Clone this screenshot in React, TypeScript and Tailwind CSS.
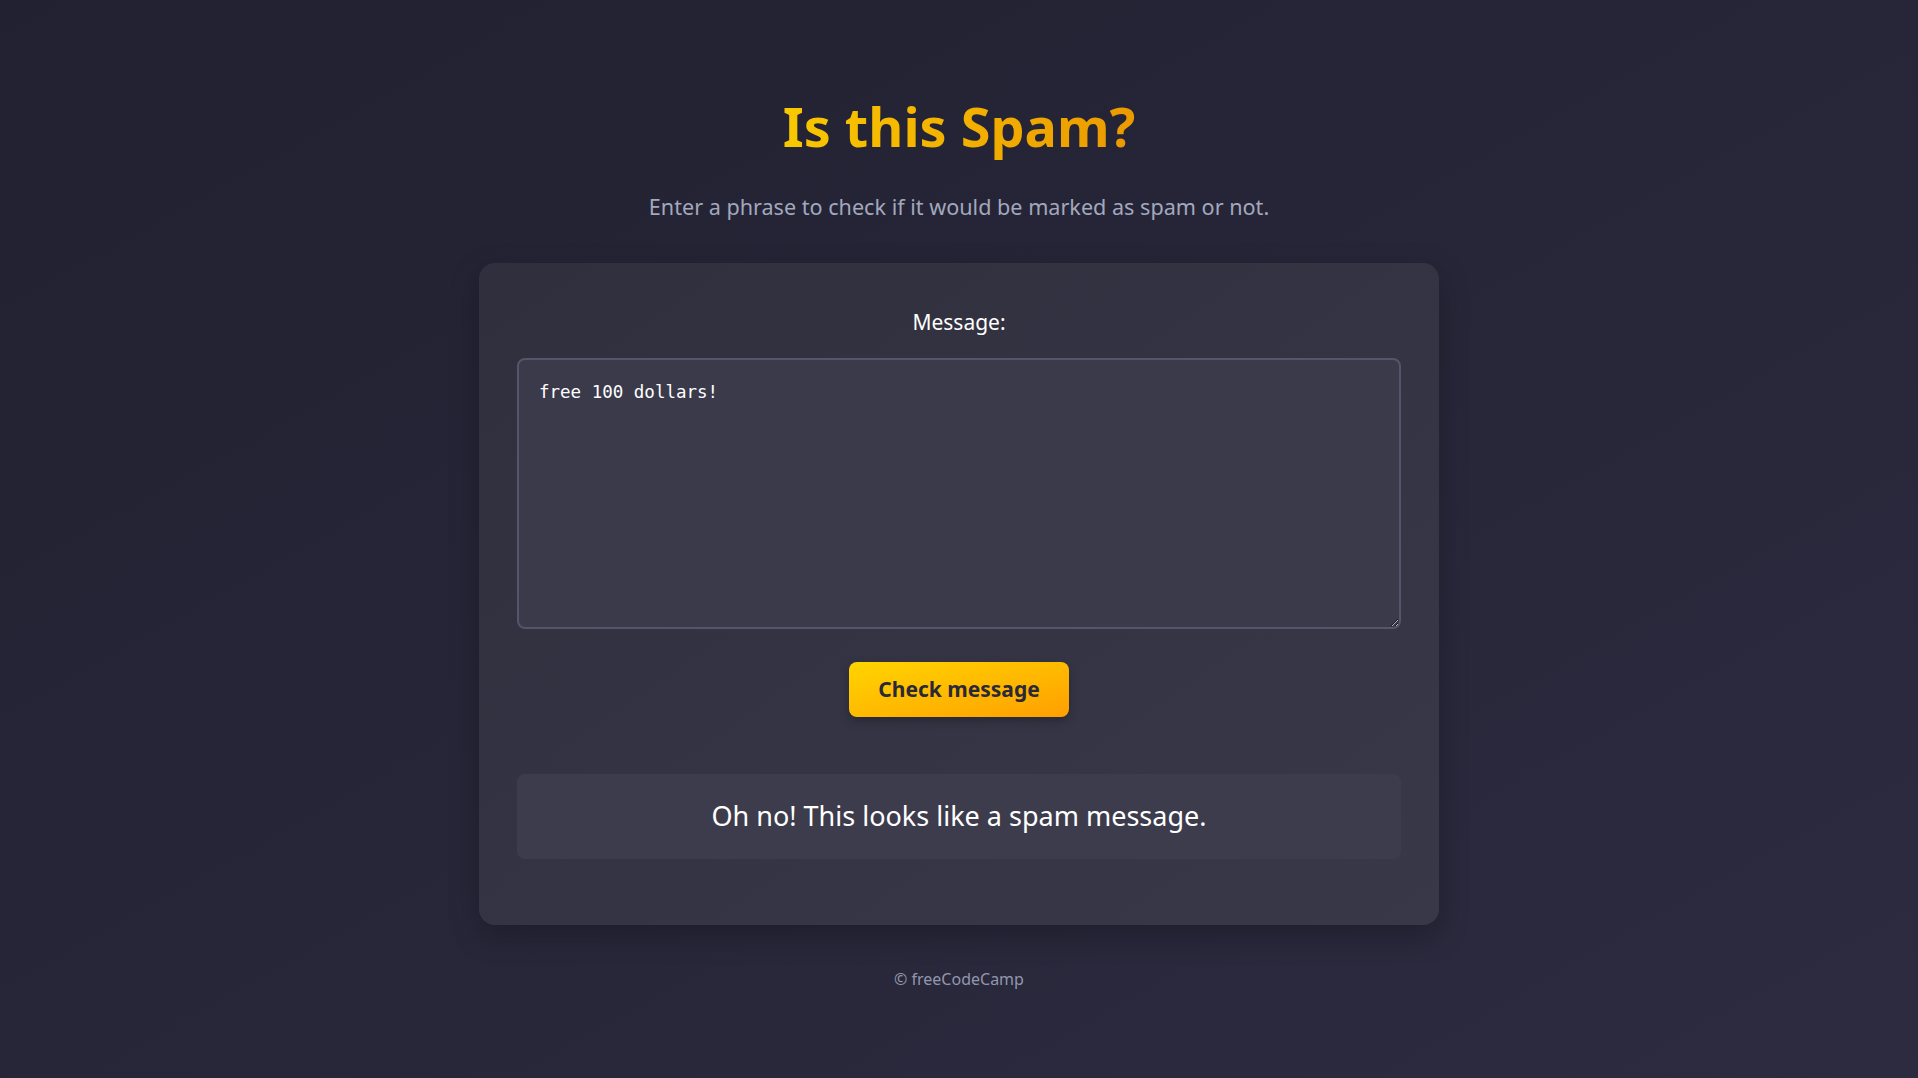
import { useState } from "react";

export default function App() {
  const [message, setMessage] = useState("free 100 dollars!");

  return (
    <div className="flex min-h-screen flex-col items-center bg-gradient-to-br from-[#222131] to-[#2c2b40] font-['Noto_Sans',sans-serif]">
      <h1 className="mt-[92px] bg-gradient-to-r from-[#f9c800] to-[#eb9a00] bg-clip-text text-[54px] leading-[68px] font-bold text-transparent">
        Is this Spam?
      </h1>
      <p className="mt-[32px] text-[21.6px] leading-[30px] text-[#a2a8bd]">
        Enter a phrase to check if it would be marked as spam or not.
      </p>

      <main className="mt-[41px] w-[960px] rounded-2xl bg-gradient-to-br from-[#302f3e] to-[#393848] px-[38px] pt-[45px] pb-[66px] shadow-[0_10px_30px_rgba(0,0,0,0.25)]">
        <label htmlFor="message-input" className="block text-center text-[21px] leading-[28px] text-white">
          Message:
        </label>
        <textarea
          id="message-input"
          value={message}
          onChange={(event) => setMessage(event.target.value)}
          className="mt-[22px] block h-[271px] w-full resize-y rounded-lg border-2 border-[#55546a] bg-[#3b3a4b] px-[20px] py-[19px] font-['DejaVu_Sans_Mono',monospace] text-[17.5px] leading-[26px] text-white outline-none"
        />
        <div className="mt-[33px] flex justify-center">
          <button
            type="button"
            className="h-[55px] w-[220px] rounded-lg bg-gradient-to-br from-[#ffd500] to-[#ff9f00] text-[21px] font-bold text-[#2a2938] shadow-[0_4px_10px_rgba(0,0,0,0.25)]"
          >
            Check message
          </button>
        </div>
        <div className="mt-[57px] flex h-[85px] items-center justify-center rounded-lg bg-[#3d3c4d] text-[27px] text-white">
          Oh no! This looks like a spam message.
        </div>
      </main>

      <footer className="mt-[42px] text-[16px] text-[#9297ad]">© freeCodeCamp</footer>
    </div>
  );
}
